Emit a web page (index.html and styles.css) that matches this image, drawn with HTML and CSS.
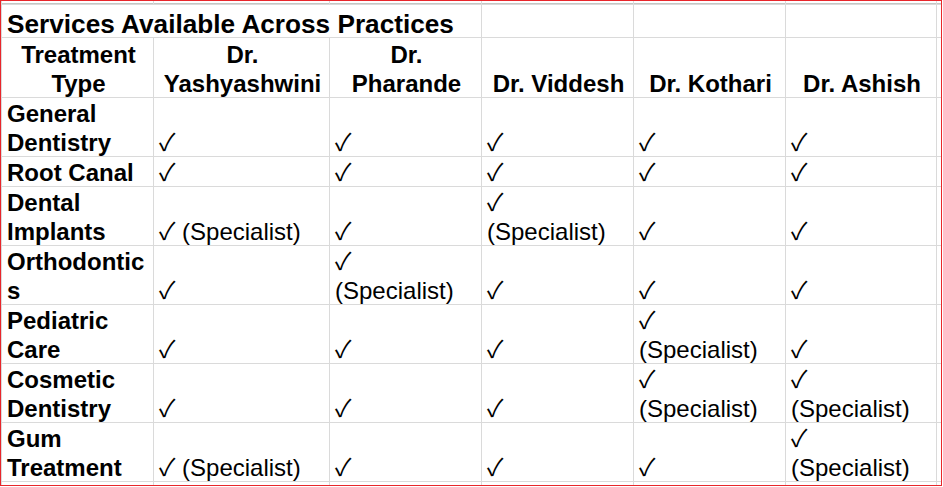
FILE: index.html
```html
<!DOCTYPE html>
<html lang="en">
<head>
<meta charset="utf-8">
<title>Services Available Across Practices</title>
<link rel="stylesheet" href="styles.css">
</head>
<body>
<div class="frame">
  <div class="sheet">
    <div class="c top"></div><div class="c top"></div><div class="c top"></div><div class="c top"></div><div class="c top"></div><div class="c top"></div><div class="c top"></div>

    <div class="c title"><span>Services Available Across Practices</span></div><div class="c"></div><div class="c"></div><div class="c"></div><div class="c"></div>

    <div class="c h"><span>Treatment Type</span></div>
    <div class="c h"><span>Dr. Yashyashwini</span></div>
    <div class="c h"><span>Dr. Pharande</span></div>
    <div class="c h"><span>Dr. Viddesh</span></div>
    <div class="c h"><span>Dr. Kothari</span></div>
    <div class="c h"><span>Dr. Ashish</span></div>
    <div class="c"></div>

    <div class="c lab"><span>General Dentistry</span></div>
    <div class="c"><span>✓</span></div><div class="c"><span>✓</span></div><div class="c"><span>✓</span></div><div class="c"><span>✓</span></div><div class="c"><span>✓</span></div><div class="c"></div>

    <div class="c lab"><span>Root Canal</span></div>
    <div class="c"><span>✓</span></div><div class="c"><span>✓</span></div><div class="c"><span>✓</span></div><div class="c"><span>✓</span></div><div class="c"><span>✓</span></div><div class="c"></div>

    <div class="c lab"><span>Dental Implants</span></div>
    <div class="c"><span>✓ (Specialist)</span></div><div class="c"><span>✓</span></div><div class="c"><span>✓<br>(Specialist)</span></div><div class="c"><span>✓</span></div><div class="c"><span>✓</span></div><div class="c"></div>

    <div class="c lab"><span>Orthodontics</span></div>
    <div class="c"><span>✓</span></div><div class="c"><span>✓<br>(Specialist)</span></div><div class="c"><span>✓</span></div><div class="c"><span>✓</span></div><div class="c"><span>✓</span></div><div class="c"></div>

    <div class="c lab"><span>Pediatric Care</span></div>
    <div class="c"><span>✓</span></div><div class="c"><span>✓</span></div><div class="c"><span>✓</span></div><div class="c"><span>✓<br>(Specialist)</span></div><div class="c"><span>✓</span></div><div class="c"></div>

    <div class="c lab"><span>Cosmetic Dentistry</span></div>
    <div class="c"><span>✓</span></div><div class="c"><span>✓</span></div><div class="c"><span>✓</span></div><div class="c"><span>✓<br>(Specialist)</span></div><div class="c"><span>✓<br>(Specialist)</span></div><div class="c"></div>

    <div class="c lab"><span>Gum Treatment</span></div>
    <div class="c"><span>✓ (Specialist)</span></div><div class="c"><span>✓</span></div><div class="c"><span>✓</span></div><div class="c"><span>✓</span></div><div class="c"><span>✓<br>(Specialist)</span></div><div class="c"></div>

    <div class="c"></div><div class="c"></div><div class="c"></div><div class="c"></div><div class="c"></div><div class="c"></div><div class="c"></div>
  </div>
</div>
</body>
</html>
```

FILE: styles.css
```css
html, body {
  margin: 0;
  padding: 0;
  background: #ffffff;
}

.frame {
  width: 940px;
  height: 484px;
  border: 1px solid #e8262b;
  overflow: hidden;
}

.sheet {
  display: grid;
  grid-template-columns: 151px 175px 151px 151px 151px 150px 4px;
  grid-template-rows: 3px 32px 59px 58px 29px 58px 58px 58px 58px 58px 3px;
  gap: 1px;
  padding-left: 1px;
  background: #dadada;
  height: 484px;
  box-sizing: border-box;
  font-family: "Liberation Sans", Arial, "Noto Sans CJK JP", sans-serif;
  font-size: 24px;
  line-height: 29px;
  color: #000000;
}

.c {
  background: #ffffff;
  display: flex;
  flex-direction: column;
  justify-content: flex-end;
  padding: 0 3px 1px 5px;
  min-width: 0;
  overflow: hidden;
}

.c span {
  margin-bottom: -2px;
}

.top {
  padding: 0;
  border-bottom: 1px solid #c4c7c4;
  box-sizing: border-box;
}

.title {
  grid-column: span 3;
  font-weight: bold;
  font-size: 26.2px;
  line-height: 30px;
  white-space: nowrap;
  padding-bottom: 0;
  overflow: visible;
}

.title span {
  margin-bottom: -2px;
}

.h {
  font-weight: bold;
  text-align: center;
}

.lab {
  font-weight: bold;
  overflow-wrap: anywhere;
}
```
